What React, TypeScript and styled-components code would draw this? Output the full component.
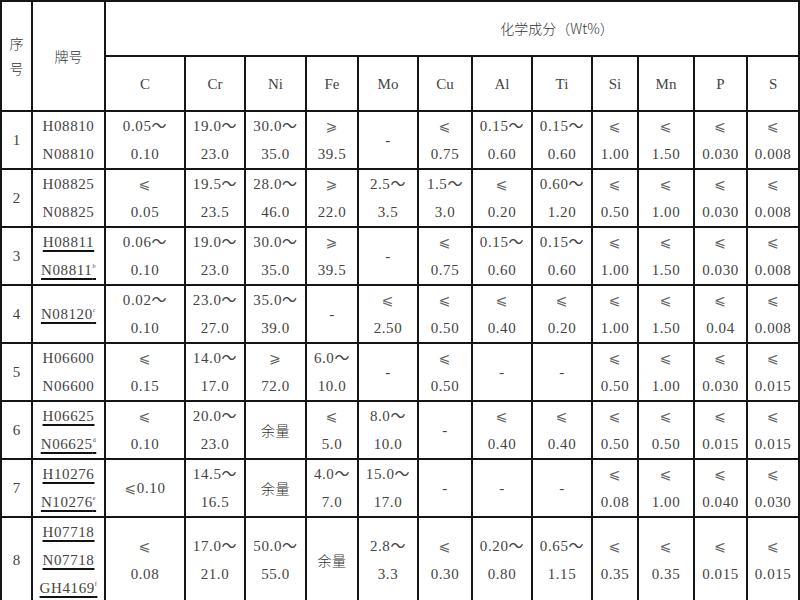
import React from 'react';
import styled, { createGlobalStyle } from 'styled-components';

const GlobalStyle = createGlobalStyle`
  html, body {
    margin: 0;
    padding: 0;
    background: #fff;
  }
  body {
    font-family: "Liberation Serif", "Noto Sans CJK SC", serif;
    color: #444;
  }
`;

const Table = styled.table`
  width: 800px;
  table-layout: fixed;
  border-collapse: collapse;
  font-size: 15px;
`;

const Cell = styled.td<{ $padLeft?: number }>`
  border: 2px solid #151515;
  padding: 0;
  padding-left: ${p => (p.$padLeft ? `${p.$padLeft}px` : '0')};
  text-align: center;
  vertical-align: middle;
  white-space: nowrap;
  line-height: 28px;
`;

const HeadRow = styled.tr<{ $h: number }>`
  height: ${p => p.$h}px;
`;

const BodyRow = styled.tr<{ $h: number }>`
  height: ${p => p.$h}px;
`;

const Han = styled.span`
  font-family: "Noto Sans CJK SC", sans-serif;
  font-size: 14px;
  font-weight: 300;
  color: #333;
`;

const StackedHan = styled(Han)`
  display: block;
  line-height: 25px;
`;

const Line = styled.div`
  letter-spacing: 0.6px;
`;

const Code = styled.span<{ $u?: boolean }>`
  text-decoration: ${p => (p.$u ? 'underline' : 'none')};
  text-decoration-color: #111;
  text-decoration-thickness: 2px;
  text-underline-offset: 3px;
`;

const Sup = styled.sup`
  font-size: 6px;
  vertical-align: 7px;
  line-height: 0;
`;

const Sym = styled.span`
  font-family: "DejaVu Sans", sans-serif;
  font-size: 14px;
  color: #666;
`;

type CodeItem = { t: string; u?: boolean; s?: string };
type Row = { no: string; h: number; codes: CodeItem[]; vals: string[][] };

const elements = ['C', 'Cr', 'Ni', 'Fe', 'Mo', 'Cu', 'Al', 'Ti', 'Si', 'Mn', 'P', 'S'];
const colWidths = [31, 73, 80, 60, 61, 52, 60, 54, 60, 60, 46, 56, 53, 52];

const LE = '⩽';
const GE = '⩾';

const rows: Row[] = [
  {
    no: '1', h: 57,
    codes: [{ t: 'H08810' }, { t: 'N08810' }],
    vals: [['0.05～', '0.10'], ['19.0～', '23.0'], ['30.0～', '35.0'], [GE, '39.5'], ['-'], [LE, '0.75'],
      ['0.15～', '0.60'], ['0.15～', '0.60'], [LE, '1.00'], [LE, '1.50'], [LE, '0.030'], [LE, '0.008']],
  },
  {
    no: '2', h: 57,
    codes: [{ t: 'H08825' }, { t: 'N08825' }],
    vals: [[LE, '0.05'], ['19.5～', '23.5'], ['28.0～', '46.0'], [GE, '22.0'], ['2.5～', '3.5'], ['1.5～', '3.0'],
      [LE, '0.20'], ['0.60～', '1.20'], [LE, '0.50'], [LE, '1.00'], [LE, '0.030'], [LE, '0.008']],
  },
  {
    no: '3', h: 58,
    codes: [{ t: 'H08811', u: true }, { t: 'N08811', u: true, s: 'b' }],
    vals: [['0.06～', '0.10'], ['19.0～', '23.0'], ['30.0～', '35.0'], [GE, '39.5'], ['-'], [LE, '0.75'],
      ['0.15～', '0.60'], ['0.15～', '0.60'], [LE, '1.00'], [LE, '1.50'], [LE, '0.030'], [LE, '0.008']],
  },
  {
    no: '4', h: 58,
    codes: [{ t: 'N08120', u: true, s: 'c' }],
    vals: [['0.02～', '0.10'], ['23.0～', '27.0'], ['35.0～', '39.0'], ['-'], [LE, '2.50'], [LE, '0.50'],
      [LE, '0.40'], [LE, '0.20'], [LE, '1.00'], [LE, '1.50'], [LE, '0.04'], [LE, '0.008']],
  },
  {
    no: '5', h: 57,
    codes: [{ t: 'H06600' }, { t: 'N06600' }],
    vals: [[LE, '0.15'], ['14.0～', '17.0'], [GE, '72.0'], ['6.0～', '10.0'], ['-'], [LE, '0.50'],
      ['-'], ['-'], [LE, '0.50'], [LE, '1.00'], [LE, '0.030'], [LE, '0.015']],
  },
  {
    no: '6', h: 58,
    codes: [{ t: 'H06625', u: true }, { t: 'N06625', u: true, s: 'd' }],
    vals: [[LE, '0.10'], ['20.0～', '23.0'], ['余量'], [LE, '5.0'], ['8.0～', '10.0'], ['-'],
      [LE, '0.40'], [LE, '0.40'], [LE, '0.50'], [LE, '0.50'], [LE, '0.015'], [LE, '0.015']],
  },
  {
    no: '7', h: 57,
    codes: [{ t: 'H10276', u: true }, { t: 'N10276', u: true, s: 'e' }],
    vals: [[LE + '0.10'], ['14.5～', '16.5'], ['余量'], ['4.0～', '7.0'], ['15.0～', '17.0'], ['-'],
      ['-'], ['-'], [LE, '0.08'], [LE, '1.00'], [LE, '0.040'], [LE, '0.030']],
  },
  {
    no: '8', h: 86,
    codes: [{ t: 'H07718', u: true }, { t: 'N07718', u: true }, { t: 'GH4169', u: true, s: 'f' }],
    vals: [[LE, '0.08'], ['17.0～', '21.0'], ['50.0～', '55.0'], ['余量'], ['2.8～', '3.3'], [LE, '0.30'],
      ['0.20～', '0.80'], ['0.65～', '1.15'], [LE, '0.35'], [LE, '0.35'], [LE, '0.015'], [LE, '0.015']],
  },
];

const renderText = (s: string) => {
  if (s === '余量') return <Han>{s}</Han>;
  if (s.startsWith(LE) || s.startsWith(GE)) {
    return (
      <>
        <Sym>{s[0]}</Sym>
        {s.slice(1)}
      </>
    );
  }
  return s;
};

export default function App() {
  return (
    <>
      <GlobalStyle />
      <Table>
        <colgroup>
          {colWidths.map((w, i) => (
            <col key={i} style={{ width: w }} />
          ))}
        </colgroup>
        <tbody>
          <HeadRow $h={55}>
            <Cell rowSpan={2}>
              <StackedHan>序</StackedHan>
              <StackedHan>号</StackedHan>
            </Cell>
            <Cell rowSpan={2}>
              <Han>牌号</Han>
            </Cell>
            <Cell colSpan={12} $padLeft={210}>
              <Han>化学成分（Wt%）</Han>
            </Cell>
          </HeadRow>
          <HeadRow $h={55}>
            {elements.map(el => (
              <Cell key={el}>{el}</Cell>
            ))}
          </HeadRow>
          {rows.map(r => (
            <BodyRow key={r.no} $h={r.h}>
              <Cell>{r.no}</Cell>
              <Cell>
                {r.codes.map(c => (
                  <Line key={c.t}>
                    <Code $u={c.u}>
                      {c.t}
                      {c.s && <Sup>{c.s}</Sup>}
                    </Code>
                  </Line>
                ))}
              </Cell>
              {r.vals.map((v, i) => (
                <Cell key={i}>
                  {v.map((l, j) => (
                    <Line key={j}>{renderText(l)}</Line>
                  ))}
                </Cell>
              ))}
            </BodyRow>
          ))}
        </tbody>
      </Table>
    </>
  );
}
